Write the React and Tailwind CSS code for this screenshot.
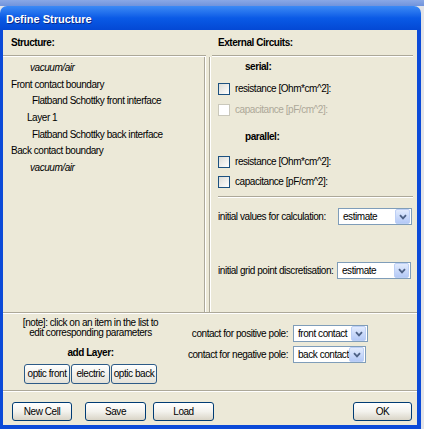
import React from 'react';

const line = 'h-[2px] border-t border-b border-t-[#aca899] border-b-white';

function Chevron() {
  return (
    <svg width="8" height="6" viewBox="0 0 8 6">
      <path d="M1 1.2 L4 4.4 L7 1.2" fill="none" stroke="#4d6185" strokeWidth="1.8" />
    </svg>
  );
}

function Select({ value, w }) {
  return (
    <div className={`flex h-[17px] items-center border border-[#7f9db9] bg-white ${w}`}>
      <span className="flex-1 overflow-hidden pl-[4px] leading-none">{value}</span>
      <span className="mr-px flex h-[15px] w-[15px] shrink-0 items-center justify-center rounded-[2px] border border-[#bccff5] bg-gradient-to-b from-[#e2ebfd] to-[#b4c9f6]">
        <Chevron />
      </span>
    </div>
  );
}

function Check({ label, disabled }) {
  return (
    <div className="flex h-[13px] items-center pl-[7px]">
      <span
        className={`h-[12px] w-[12px] border ${
          disabled ? 'border-[#cac8bb] bg-white' : 'border-[#1c5180] bg-gradient-to-br from-[#dcdcd7] to-white'
        }`}
      />
      <span className={`ml-[5px] leading-none ${disabled ? 'text-[#aca899]' : ''}`}>{label}</span>
    </div>
  );
}

function Button({ children, w }) {
  return (
    <button className={`flex h-[19px] items-center justify-center rounded-[3px] border border-[#003c74] bg-gradient-to-b from-white via-[#f3f2ed] to-[#d9d4c7] leading-none ${w}`}>
      {children}
    </button>
  );
}

function LayerButton({ children, w }) {
  return (
    <button className={`flex h-[20px] items-center justify-center rounded-[3px] border border-[#2c5a86] bg-gradient-to-b from-white to-[#e4e2d8] leading-none ${w}`}>
      {children}
    </button>
  );
}

const items = [
  { text: 'vacuum/air', pl: 'pl-[27px]', italic: true },
  { text: 'Front contact boundary', pl: 'pl-[8px]' },
  { text: 'Flatband Schottky front interface', pl: 'pl-[29px]' },
  { text: 'Layer 1', pl: 'pl-[24px]' },
  { text: 'Flatband Schottky back interface', pl: 'pl-[29px]' },
  { text: 'Back contact boundary', pl: 'pl-[8px]' },
  { text: 'vacuum/air', pl: 'pl-[27px]', italic: true },
];

export default function App() {
  return (
    <div className="flex h-[429px] w-[424px] flex-col overflow-hidden whitespace-nowrap bg-[#e3e4e8] font-['Liberation_Sans',Arial,sans-serif] text-[10px] tracking-[-0.45px] text-black">
      <div className="h-[6px] bg-gradient-to-b from-[#8aa8e6] to-[#7093dc]" />
      <div className="flex">
        <div className="flex w-[421px] flex-col">
          <div className="flex h-[24px] items-center rounded-t-[7px] bg-gradient-to-b from-[#3c8af5] via-[#0a5ae6] to-[#0448d4] pl-[6px] pt-[2px]">
            <span className="text-[11px] font-bold tracking-normal text-white [text-shadow:1px_1px_0_#0a2a8a]">
              Define Structure
            </span>
          </div>
          <div className="flex h-[399px] flex-col border-b-[4px] border-l-[3px] border-r-[4px] border-[#0b4ad8] bg-[#ece9d8]">
            <div className="flex h-[282px]">
              <div className="flex w-[203px] flex-col">
                <div className="flex h-[25px] items-center pl-[8px] font-bold">Structure:</div>
                <div className={line} />
                <div className="flex flex-1 border-r border-r-white">
                  <div className="flex-1 border-r border-r-[#aca899] pt-[2px]">
                    {items.map((it, i) => (
                      <div key={i} className={`flex h-[16.7px] items-center ${it.pl} ${it.italic ? 'italic' : ''}`}>
                        {it.text}
                      </div>
                    ))}
                  </div>
                </div>
              </div>
              <div className="w-[3px]" />
              <div className="flex flex-1 flex-col">
                <div className="flex h-[25px] items-center pl-[9px] font-bold">External Circuits:</div>
                <div className={`ml-[3px] mr-[4px] ${line}`} />
                <div className="flex flex-1 border-l border-l-[#aca899]">
                  <div className="flex flex-1 flex-col border-l border-l-white">
                    <div className="mt-[4px] h-[12px] pl-[34px] font-bold leading-[12px]">serial:</div>
                    <div className="mt-[9px]">
                      <Check label="resistance [Ohm*cm^2]:" />
                    </div>
                    <div className="mt-[8px]">
                      <Check label="capacitance [pF/cm^2]:" disabled />
                    </div>
                    <div className="mt-[15px] h-[12px] pl-[34px] font-bold leading-[12px]">parallel:</div>
                    <div className="mt-[12px]">
                      <Check label="resistance [Ohm*cm^2]:" />
                    </div>
                    <div className="mt-[7px]">
                      <Check label="capacitance [pF/cm^2]:" />
                    </div>
                    <div className={`ml-[7px] mr-[4px] mt-[8px] ${line}`} />
                    <div className="mt-[10px] flex h-[17px] items-center pl-[7px] pr-[5px]">
                      <span>initial values for calculation:</span>
                      <div className="ml-auto">
                        <Select value="estimate" w="w-[74px]" />
                      </div>
                    </div>
                    <div className="mt-[37px] flex h-[17px] items-center pl-[7px] pr-[6px]">
                      <span>initial grid point discretisation:</span>
                      <div className="ml-auto">
                        <Select value="estimate" w="w-[74px]" />
                      </div>
                    </div>
                  </div>
                </div>
              </div>
            </div>
            <div className={line} />
            <div className="flex h-[76px]">
              <div className="flex w-[175px] flex-col items-center pt-[4px]">
                <div className="text-center leading-[10px]">
                  [note]: click on an item in the list to
                  <br />
                  edit corresponding parameters
                </div>
                <div className="mt-[9px] h-[12px] font-bold leading-[12px]">add Layer:</div>
                <div className="mt-[5px] flex gap-px">
                  <LayerButton w="w-[46px]">optic front</LayerButton>
                  <LayerButton w="w-[39px]">electric</LayerButton>
                  <LayerButton w="w-[46px]">optic back</LayerButton>
                </div>
              </div>
              <div className="flex flex-col pt-[11px]">
                <div className="flex h-[17px] items-center">
                  <span className="w-[110px] text-right">contact for positive pole:</span>
                  <div className="ml-[5px]">
                    <Select value="front contact" w="w-[75px]" />
                  </div>
                </div>
                <div className="mt-[4px] flex h-[17px] items-center">
                  <span className="w-[110px] text-right">contact for negative pole:</span>
                  <div className="ml-[5px]">
                    <Select value="back contact" w="w-[73px]" />
                  </div>
                </div>
              </div>
            </div>
            <div className={line} />
            <div className="flex flex-1 pl-[9px] pr-[5px] pt-[10px]">
              <Button w="w-[60px]">New Cell</Button>
              <div className="ml-[13px]">
                <Button w="w-[61px]">Save</Button>
              </div>
              <div className="ml-[7px]">
                <Button w="w-[61px]">Load</Button>
              </div>
              <div className="ml-auto">
                <Button w="w-[59px]">OK</Button>
              </div>
            </div>
          </div>
        </div>
        <div className="flex-1" />
      </div>
    </div>
  );
}
